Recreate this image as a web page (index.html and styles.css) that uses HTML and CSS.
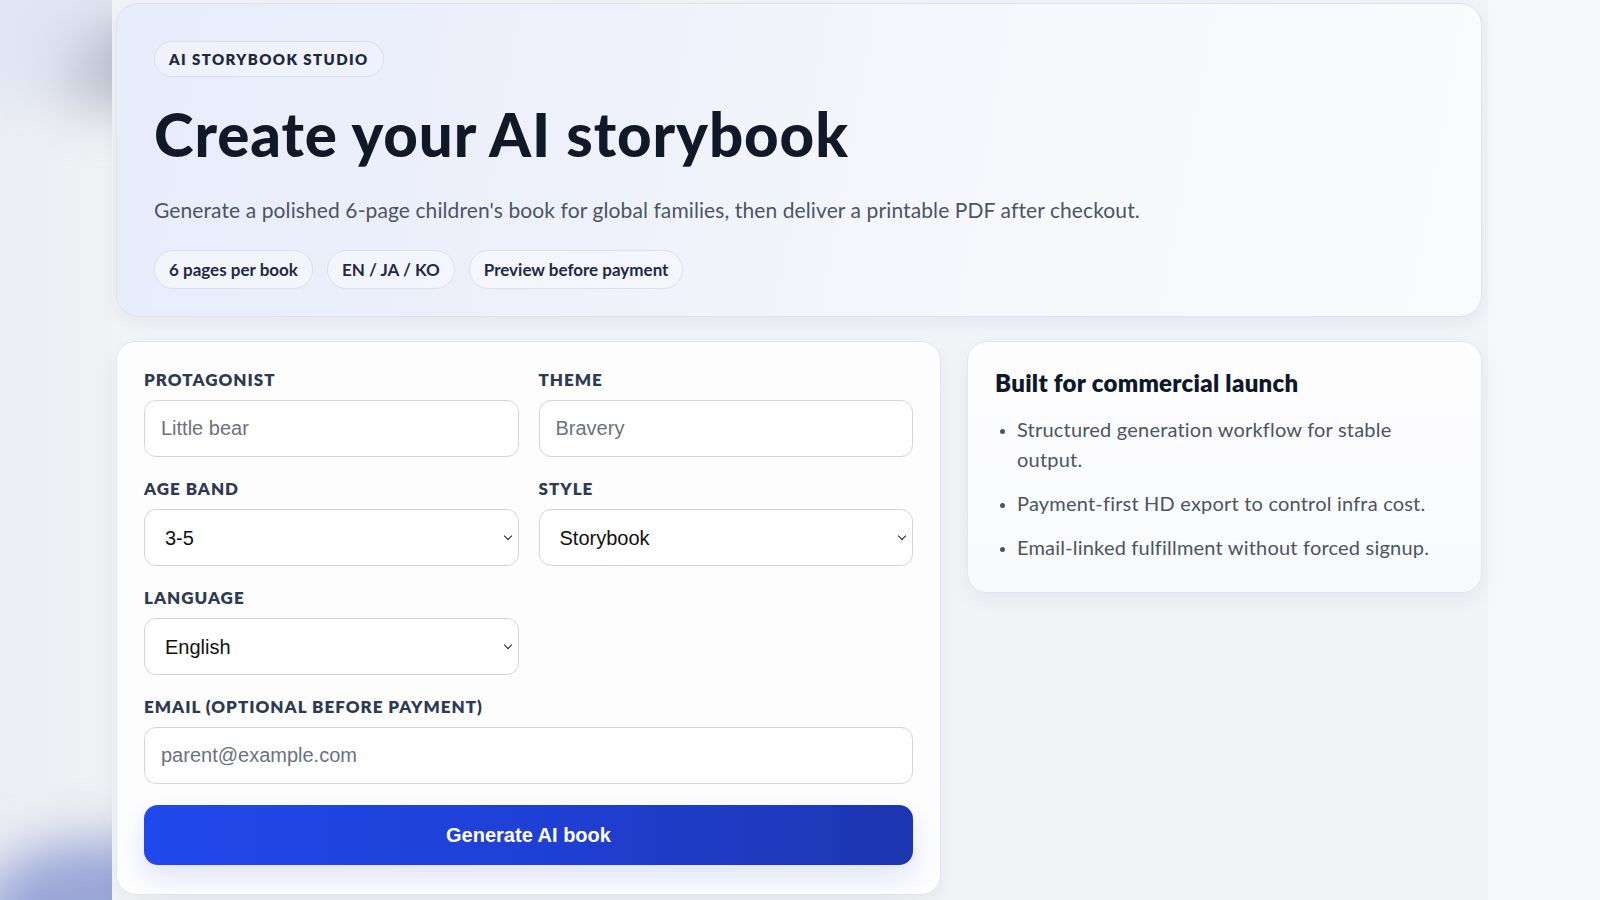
FILE: index.html
```html
<!DOCTYPE html>
<html lang="en">
<head>
<meta charset="utf-8">
<title>AI Storybook Studio</title>
<link rel="stylesheet" href="styles.css">
</head>
<body>
<div class="backdrop">
  <span class="blob blob-top"></span>
  <span class="blob blob-tint"></span>
  <span class="blob blob-bottom"></span>
</div>
<main class="shell">
  <section class="hero">
    <span class="eyebrow">AI STORYBOOK STUDIO</span>
    <h1 class="title">Create your AI storybook</h1>
    <p class="lead">Generate a polished 6-page children's book for global families, then deliver a printable PDF after checkout.</p>
    <div class="pills">
      <span class="pill">6 pages per book</span>
      <span class="pill">EN / JA / KO</span>
      <span class="pill">Preview before payment</span>
    </div>
  </section>

  <div class="grid">
    <form class="card form-card">
      <div class="fields">
        <label class="field">
          <span class="label">PROTAGONIST</span>
          <input class="control" type="text" placeholder="Little bear">
        </label>
        <label class="field">
          <span class="label">THEME</span>
          <input class="control" type="text" placeholder="Bravery">
        </label>
        <label class="field">
          <span class="label">AGE BAND</span>
          <span class="select-wrap">
            <select class="control select">
              <option>3-5</option>
              <option>6-8</option>
            </select>
          </span>
        </label>
        <label class="field">
          <span class="label">STYLE</span>
          <span class="select-wrap">
            <select class="control select">
              <option>Storybook</option>
              <option>Watercolor</option>
            </select>
          </span>
        </label>
        <label class="field">
          <span class="label">LANGUAGE</span>
          <span class="select-wrap">
            <select class="control select">
              <option>English</option>
              <option>日本語</option>
              <option>한국어</option>
            </select>
          </span>
        </label>
        <label class="field field-wide">
          <span class="label">EMAIL (OPTIONAL BEFORE PAYMENT)</span>
          <input class="control" type="email" placeholder="parent@example.com">
        </label>
      </div>
      <button class="primary" type="button">Generate AI book</button>
    </form>

    <aside class="card side-card">
      <h2 class="side-title">Built for commercial launch</h2>
      <ul class="points">
        <li>Structured generation workflow for stable output.</li>
        <li>Payment-first HD export to control infra cost.</li>
        <li>Email-linked fulfillment without forced signup.</li>
      </ul>
    </aside>
  </div>
</main>
</body>
</html>
```

FILE: styles.css
```css
* { box-sizing: border-box; }

html, body {
  margin: 0;
  height: 100%;
}

body {
  font-family: "Lato", "Noto Sans", sans-serif;
  background: linear-gradient(90deg, #eceef4 0%, #f0f1f4 7%, #f4f5f7 50%, #f7f8f9 100%);
  min-height: 900px;
  overflow: hidden;
  position: relative;
}

.backdrop {
  position: absolute;
  inset: 0;
  pointer-events: none;
  overflow: hidden;
}

.blob {
  position: absolute;
  border-radius: 50%;
  filter: blur(26px);
}

.blob-top {
  width: 130px;
  height: 100px;
  left: 50px;
  top: 10px;
  background: rgba(165, 170, 188, 0.7);
}

.blob-tint {
  width: 200px;
  height: 200px;
  left: -90px;
  top: -100px;
  background: rgba(220, 226, 245, 0.7);
}

.blob-bottom {
  width: 240px;
  height: 150px;
  left: -20px;
  top: 840px;
  background: rgba(125, 140, 205, 0.75);
}

.shell {
  position: relative;
  width: 1376px;
  margin: 0 auto;
  min-height: 900px;
  padding: 3px 6px 0 4px;
  background: linear-gradient(180deg, #f2f3f6 0%, #f3f4f7 60%, #f3f4f6 100%);
}

.hero {
  height: 314px;
  border: 1px solid #dde2ee;
  border-radius: 22px;
  padding: 37px 37px 0;
  background: linear-gradient(100deg, #e8ecfb 0%, #eef1fb 35%, #f7f8fc 65%, #fafbfd 100%);
  box-shadow: 0 6px 18px rgba(30, 41, 80, 0.06);
}

.eyebrow {
  display: inline-flex;
  align-items: center;
  height: 36px;
  padding: 0 14px;
  border: 1px solid #d8deef;
  border-radius: 999px;
  background: rgba(240, 243, 252, 0.8);
  color: #1e293b;
  font-size: 15px;
  font-weight: 800;
  letter-spacing: 1.4px;
}

.title {
  margin: 22px 0 0;
  font-size: 60px;
  line-height: 70px;
  font-weight: 900;
  letter-spacing: 0.9px;
  color: #111827;
}

.lead {
  margin: 27px 0 0;
  font-size: 21px;
  line-height: 28px;
  letter-spacing: 0.1px;
  color: #4b5563;
}

.pills {
  display: flex;
  gap: 14px;
  margin-top: 26px;
}

.pill {
  display: inline-flex;
  align-items: center;
  height: 39px;
  padding: 0 14px;
  border: 1px solid #dbe0ee;
  border-radius: 999px;
  background: rgba(244, 246, 253, 0.85);
  color: #1f2a44;
  font-size: 17px;
  font-weight: 700;
}

.grid {
  display: grid;
  grid-template-columns: 825px 515px;
  gap: 26px;
  align-items: start;
  margin-top: 24px;
}

.card {
  background: #fdfdfe;
  border: 1px solid #e2e6ee;
  border-radius: 20px;
  box-shadow: 0 8px 22px rgba(30, 41, 80, 0.06);
}

.form-card {
  padding: 28px 27px 29px;
  margin: 0;
}

.fields {
  display: grid;
  grid-template-columns: 1fr 1fr;
  column-gap: 20px;
  row-gap: 22px;
}

.field {
  display: flex;
  flex-direction: column;
  gap: 10px;
}

.field-wide {
  grid-column: 1 / -1;
}

.label {
  font-size: 17px;
  line-height: 20px;
  font-weight: 800;
  letter-spacing: 1px;
  color: #2d3a52;
}

.control {
  width: 100%;
  height: 57px;
  border: 1px solid #cfd5e2;
  border-radius: 12px;
  background: #fff;
  padding: 0 16px;
  font-family: "Liberation Sans", Arial, sans-serif;
  font-size: 20px;
  color: #111;
  outline: none;
}

.control::placeholder {
  color: #6b7280;
}

.select-wrap {
  position: relative;
  display: block;
}

.select {
  appearance: none;
  -webkit-appearance: none;
  padding: 0 40px 0 20px;
}

.select-wrap::after {
  content: "";
  position: absolute;
  right: 8px;
  top: 24px;
  width: 5px;
  height: 5px;
  border-right: 1.3px solid #222;
  border-bottom: 1.3px solid #222;
  transform: rotate(45deg);
  pointer-events: none;
}

.primary {
  display: block;
  width: 100%;
  height: 60px;
  margin-top: 21px;
  border: 0;
  border-radius: 14px;
  background: linear-gradient(90deg, #2048ea 0%, #1f40d6 50%, #1d36b0 100%);
  color: #fff;
  font-family: "Liberation Sans", Arial, sans-serif;
  font-size: 20px;
  font-weight: 700;
  box-shadow: 0 12px 26px rgba(37, 72, 220, 0.14);
  cursor: pointer;
}

.side-card {
  padding: 26px 27px 16px;
  background: linear-gradient(180deg, #fdfdfe 0%, #f9fafc 100%);
}

.side-title {
  margin: 0;
  font-size: 24px;
  line-height: 30px;
  font-weight: 800;
  letter-spacing: 0.3px;
  color: #0f172a;
}

.points {
  margin: 16px 0 0;
  padding-left: 22px;
  font-size: 20px;
  line-height: 30px;
  letter-spacing: 0.2px;
  color: #4b5563;
}

.points li {
  margin-bottom: 14px;
  padding-left: 0;
}

.points li::marker {
  font-size: 15px;
}
```
